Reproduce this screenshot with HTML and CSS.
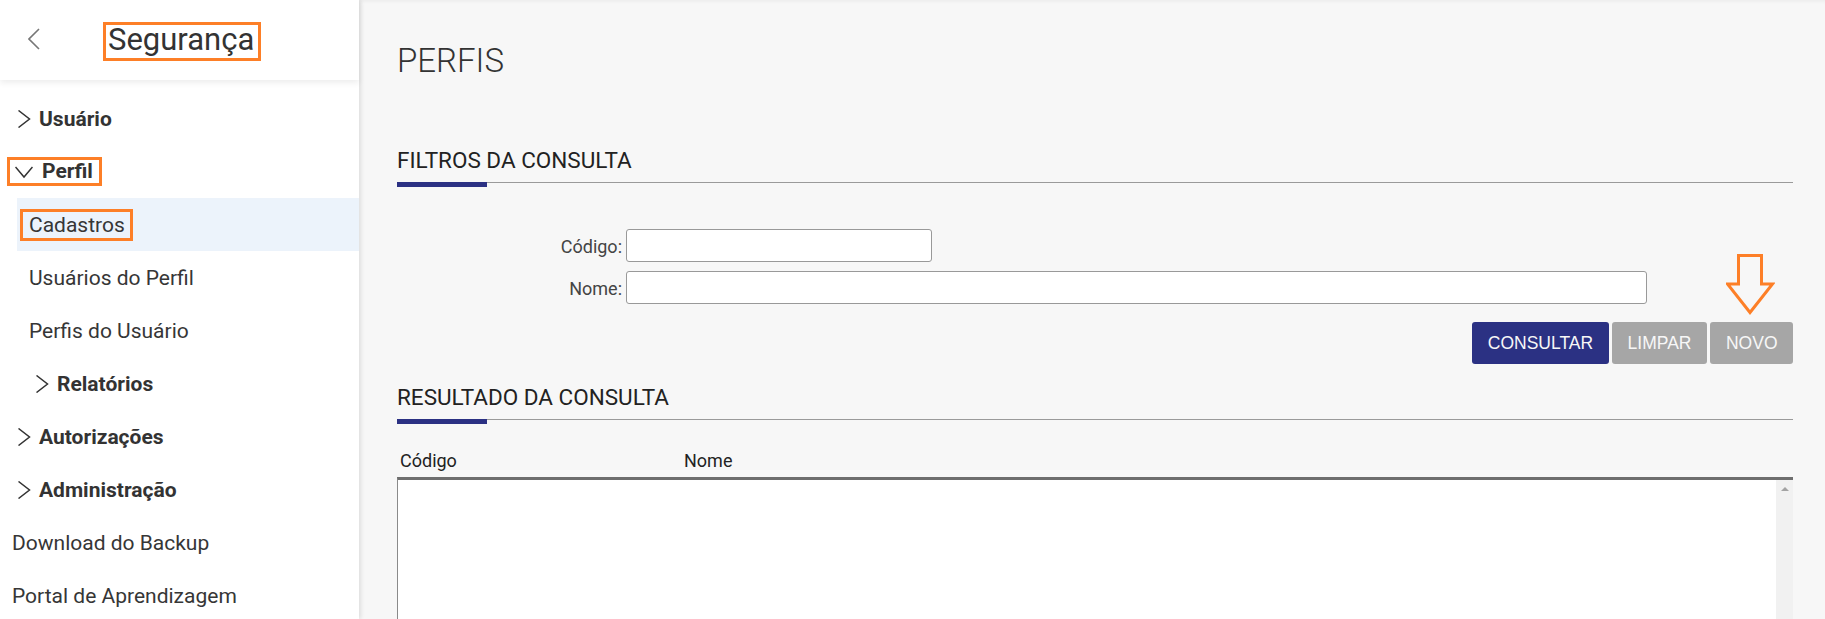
FILE: index.html
```html
<!DOCTYPE html>
<html lang="pt-BR">
<head>
<meta charset="utf-8">
<title>Perfis</title>
<link rel="stylesheet" href="styles.css">
</head>
<body>
<div class="app">
  <aside class="sidebar">
    <div class="side-head">
      <svg class="back" width="12" height="22" viewBox="0 0 12 22"><polyline points="11,1 1,11 11,21" fill="none" stroke="#777" stroke-width="1.6"/></svg>
      <div class="side-title mark">Segurança</div>
    </div>
    <nav class="menu">
      <div class="row top exp"><svg class="chev" width="18" height="18" viewBox="0 0 18 18"><polyline points="3.5,0.5 14.5,9 3.5,17.5" fill="none" stroke="#333" stroke-width="1.5"/></svg><span class="b">Usuário</span></div>
      <div class="row top"><div class="mark perfil"><svg class="chev" width="18" height="18" viewBox="0 0 18 18"><polyline points="0.5,4 9,14 17.5,4" fill="none" stroke="#333" stroke-width="1.5"/></svg><span class="b">Perfil</span></div></div>
      <div class="row sub active"><span class="mark cad">Cadastros</span></div>
      <div class="row sub plain">Usuários do Perfil</div>
      <div class="row sub plain">Perfis do Usuário</div>
      <div class="row sub exp"><svg class="chev" width="18" height="18" viewBox="0 0 18 18"><polyline points="3.5,0.5 14.5,9 3.5,17.5" fill="none" stroke="#333" stroke-width="1.5"/></svg><span class="b">Relatórios</span></div>
      <div class="row top exp"><svg class="chev" width="18" height="18" viewBox="0 0 18 18"><polyline points="3.5,0.5 14.5,9 3.5,17.5" fill="none" stroke="#333" stroke-width="1.5"/></svg><span class="b">Autorizações</span></div>
      <div class="row top exp"><svg class="chev" width="18" height="18" viewBox="0 0 18 18"><polyline points="3.5,0.5 14.5,9 3.5,17.5" fill="none" stroke="#333" stroke-width="1.5"/></svg><span class="b">Administração</span></div>
      <div class="row top plain">Download do Backup</div>
      <div class="row top plain">Portal de Aprendizagem</div>
    </nav>
  </aside>
  <main class="content">
    <h1 class="page-title">PERFIS</h1>
    <section class="filters">
      <h2 class="sec-title">FILTROS DA CONSULTA</h2>
      <div class="sec-bar"></div>
      <div class="form">
        <label class="lbl" for="cod">Código:</label>
        <input id="cod" class="inp short" type="text">
        <label class="lbl" for="nome">Nome:</label>
        <input id="nome" class="inp" type="text">
      </div>
      <div class="actions">
        <button class="btn primary">CONSULTAR</button>
        <button class="btn gray">LIMPAR</button>
        <div class="novo-wrap">
          <svg class="arrow" width="49" height="61" viewBox="0 0 49 61"><polygon points="12.5,1.5 35.5,1.5 35.5,30 46.5,30 24,58.5 1.5,30 12.5,30" fill="none" stroke="#fd7f27" stroke-width="3"/></svg>
          <button class="btn gray">NOVO</button>
        </div>
      </div>
    </section>
    <section class="results">
      <h2 class="sec-title">RESULTADO DA CONSULTA</h2>
      <div class="sec-bar"></div>
      <div class="thead">
        <div class="th c1">Código</div>
        <div class="th">Nome</div>
      </div>
      <div class="tbox">
        <div class="tbody"></div>
        <div class="scroll"><span class="up"></span></div>
      </div>
    </section>
  </main>
</div>
</body>
</html>
```

FILE: styles.css
```css
* { box-sizing: border-box; }
html, body { margin: 0; padding: 0; }
body {
  font-family: Roboto, "Liberation Sans", Arial, sans-serif;
  color: #333;
  background: #f7f7f7;
  overflow: hidden;
}
.app {
  display: flex;
  height: 619px;
  overflow: hidden;
}
.sidebar {
  width: 359px;
  flex: 0 0 359px;
  background: #fff;
  box-shadow: 2px 0 4px rgba(0,0,0,0.10);
  position: relative;
  z-index: 2;
}
.side-head {
  height: 80px;
  display: flex;
  align-items: flex-start;
  padding-left: 28px;
  box-shadow: 0 3px 6px rgba(0,0,0,0.07);
}
.back { margin-top: 28px; flex: none; }
.mark { border: 3px solid #fd7f27; }
.side-title {
  margin-top: 22px;
  margin-left: 63px;
  font-size: 31px;
  line-height: 29px;
  padding: 0 4px 4px 2px;
  color: #333;
}
.menu { padding-top: 12px; }
.row {
  height: 53px;
  display: flex;
  align-items: center;
  font-size: 21px;
  color: #363636;
  white-space: nowrap;
}
.b { font-weight: 700; color: #333; }
.chev { flex: none; margin-right: 6px; }
.row.top.exp { padding-left: 15px; }
.row.top.plain { padding-left: 12px; }
.row.top .perfil {
  margin-left: 7px;
  display: flex;
  align-items: center;
  height: 29px;
  padding: 0 6px 0 5px;
  line-height: 23px;
}
.perfil .chev { margin-right: 9px; }
.row.sub { margin-left: 17px; }
.row.sub.plain { padding-left: 12px; }
.row.sub.exp { padding-left: 16px; }
.row.active { background: #ecf3fb; }
.cad {
  margin-left: 3px;
  height: 32px;
  line-height: 26px;
  padding: 0 5px 0 6px;
}

.content {
  flex: 1;
  padding: 0 32px 0 38px;
  box-shadow: inset 0 4px 4px -3px rgba(0,0,0,0.06);
}
.page-title {
  margin: 41px 0 0;
  font-size: 33px;
  font-weight: 300;
  line-height: 40px;
  color: #333;
}
.sec-title {
  margin: 0;
  font-size: 22.5px;
  font-weight: 400;
  line-height: 24px;
  padding-bottom: 10px;
  color: #222;
}
.filters .sec-title { margin-top: 67px; }
.sec-bar {
  height: 5px;
  background:
    linear-gradient(#2b3183, #2b3183) 0 0 / 90px 5px no-repeat,
    linear-gradient(#9a9a9a, #9a9a9a) 0 0 / 100% 1px no-repeat;
}
.form {
  margin-top: 42px;
  display: grid;
  grid-template-columns: 225px 1021px;
  column-gap: 4px;
  row-gap: 9px;
  align-items: center;
}
.lbl {
  text-align: right;
  font-size: 18px;
  line-height: 31px;
  padding-top: 2px;
  color: #444;
}
.inp {
  height: 33px;
  width: 100%;
  border: 1px solid #999;
  border-radius: 3px;
  background: #fff;
  font: inherit;
  margin: 0;
}
.inp.short { width: 306px; }
.actions {
  margin-top: 18px;
  display: flex;
  justify-content: flex-end;
  gap: 3.5px;
}
.btn {
  height: 42px;
  padding: 0 15.5px;
  border: none;
  border-radius: 3px;
  font-family: "Liberation Sans", Arial, sans-serif;
  font-size: 17.5px;
  color: #f7f7f7;
  margin: 0;
}
.btn.primary { background: #2b3183; }
.btn.gray { background: #a6a6a6; }
.novo-wrap { position: relative; display: flex; }
.arrow {
  position: absolute;
  left: 16px;
  bottom: calc(100% + 7px);
}
.results .sec-title { margin-top: 21px; }
.thead {
  display: flex;
  padding: 25px 0 4px;
  font-size: 18px;
  line-height: 24px;
  color: #222;
}
.th.c1 { width: 287px; padding-left: 3px; }
.tbox {
  display: flex;
  height: 200px;
  border-top: 3px solid #6e6e6e;
  border-left: 1px solid #8a8a8a;
  background: #fff;
}
.tbody { flex: 1; }
.scroll {
  width: 17px;
  background: #f1f1f1;
  display: flex;
  justify-content: center;
  padding-top: 7px;
}
.up {
  width: 0;
  height: 0;
  border-left: 4px solid transparent;
  border-right: 4px solid transparent;
  border-bottom: 4px solid #a3a3a3;
}
```
